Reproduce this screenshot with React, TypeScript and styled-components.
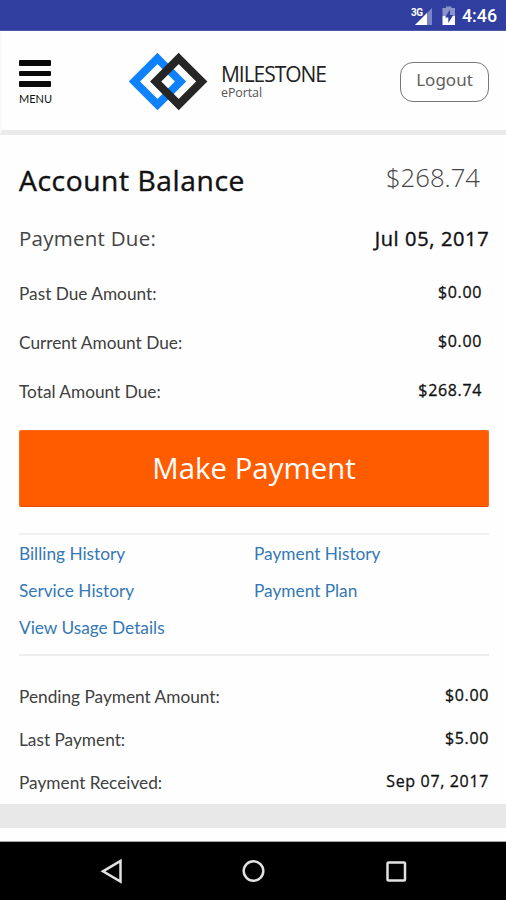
import React from 'react';
import styled, { createGlobalStyle } from 'styled-components';

const GlobalStyle = createGlobalStyle`
  * { box-sizing: border-box; }
  body { margin: 0; background: #fff; }
`;

const Screen = styled.div`
  display: flex;
  flex-direction: column;
  width: 506px;
  height: 900px;
  overflow: hidden;
  background: #fefefe;
  font-family: 'Lato', sans-serif;
  color: #111;
`;

const StatusBar = styled.div`
  flex: none;
  display: flex;
  align-items: flex-start;
  justify-content: flex-end;
  height: 31px;
  padding-right: 9px;
  background: #303f9f;
  border-bottom: 1px solid #4b58ac;
  color: #fff;
`;

const StatusIcons = styled.svg`
  display: block;
  width: 46px;
  height: 30px;
  margin-right: 5px;
`;

const NetworkType = styled.text`
  font: 700 10px 'Roboto', sans-serif;
  fill: #fff;
`;

const Clock = styled.span`
  font: 500 17.8px/32px 'Roboto', sans-serif;
`;

const Header = styled.header`
  flex: none;
  display: flex;
  height: 104px;
  padding: 0 17px;
  border-left: 2px solid #f9f9f9;
  border-bottom: 5px solid #ebebeb;
`;

const MenuButton = styled.button`
  display: flex;
  flex-direction: column;
  align-items: flex-start;
  justify-content: flex-start;
  gap: 5px;
  width: 33px;
  height: 50px;
  margin-top: 29px;
  padding: 0;
  border: 0;
  background: none;
  color: #111;
`;

const MenuBar = styled.span`
  width: 32px;
  height: 5.6px;
  border-radius: 1px;
  background: #0a0a0a;
`;

const MenuLabel = styled.span`
  font: 400 11px/14px 'Lato', sans-serif;
`;

const Brand = styled.div`
  display: flex;
  margin: 21px 0 0 77px;
`;

const BrandMark = styled.svg`
  display: block;
  width: 80px;
  height: 60px;
`;

const BrandText = styled.div`
  display: flex;
  flex-direction: column;
  margin: 11px 0 0 12px;
`;

const BrandName = styled.span`
  height: 23px;
  font: 400 21px/22px 'Open Sans', sans-serif;
  letter-spacing: -1.05px;
  white-space: nowrap;
  color: #222;
`;

const BrandSub = styled.span`
  font: 400 12.5px/14px 'Open Sans', sans-serif;
  height: 14px;
  letter-spacing: -0.1px;
  color: #555;
`;

const LogoutButton = styled.button`
  width: 89px;
  height: 40px;
  margin: 31px 0 0 auto;
  padding: 0 0 5px;
  border: 1px solid #777;
  border-radius: 13px;
  background: #fff;
  color: #606060;
  font: 400 17px/33px 'Noto Sans', sans-serif;
`;

const Main = styled.main`
  flex: none;
  display: flex;
  flex-direction: column;
  padding: 0 17px 0 19px;
`;

const Row = styled.div<{ $height: number; $inset?: number }>`
  display: flex;
  align-items: center;
  justify-content: space-between;
  height: ${(p) => p.$height}px;
  padding-right: ${(p) => p.$inset ?? 0}px;
  white-space: nowrap;
`;

const Title = styled.h1`
  margin: 0;
  font: 400 28.2px/40px 'Open Sans', sans-serif;
  letter-spacing: 0.6px;
  -webkit-text-stroke: 0.4px #111;
`;

const Balance = styled.span`
  margin-bottom: 5px;
  font: 300 25.7px/36px 'Open Sans', sans-serif;
  color: #444;
`;

const DueLabel = styled.span`
  margin-bottom: 2px;
  font: 400 20.5px/28px 'Open Sans', sans-serif;
  letter-spacing: 0.25px;
  color: #444;
`;

const DueDate = styled.span`
  margin-right: -0.3px;
  font: 400 20px/28px 'Open Sans', sans-serif;
  letter-spacing: 0.65px;
  -webkit-text-stroke: 0.4px #111;
`;

const Amounts = styled.section`
  padding: 16px 0 14px;
`;

const Label = styled.span`
  font: 400 17.25px/24px 'Lato', sans-serif;
  color: #404040;
`;

const Value = styled.span`
  margin-bottom: 4px;
  font: 400 16px/24px 'Open Sans', sans-serif;
  letter-spacing: 0.65px;
  -webkit-text-stroke: 0.3px #111;
`;

const PayButton = styled.button`
  height: 77px;
  padding: 0 0 1px;
  border: 1px solid #ff6a20;
  border-bottom: 1px solid #e94b00;
  border-radius: 2px;
  background: #ff5c00;
  color: #fff;
  font: 400 29.4px/40px 'Open Sans', sans-serif;
`;

const Links = styled.nav`
  display: grid;
  grid-template-columns: 1fr 1fr;
  grid-auto-rows: 37px;
  align-items: center;
  height: 123px;
  margin-top: 26px;
  border-top: 2px solid #f1f1f1;
  border-bottom: 2px solid #ededed;
`;

const Link = styled.a`
  font: 400 17.25px/24px 'Lato', sans-serif;
  color: #3478b5;
  text-decoration: none;
`;

const Payments = styled.section`
  padding-top: 19px;
`;

const Footer = styled.div`
  flex: none;
  height: 38px;
  border-top: 24px solid #e8e8e8;
  border-bottom: 1px solid #aaa;
`;

const NavBar = styled.div`
  flex: 1;
  background: #000;
`;

const NavIcons = styled.svg`
  display: block;
  width: 506px;
  height: 58px;
  fill: none;
  stroke: #e2e2e2;
  stroke-width: 2.5;
`;

const amounts = [
  ['Past Due Amount:', '$0.00'],
  ['Current Amount Due:', '$0.00'],
  ['Total Amount Due:', '$268.74'],
];

const links = ['Billing History', 'Payment History', 'Service History', 'Payment Plan', 'View Usage Details'];

const payments = [
  ['Pending Payment Amount:', '$0.00'],
  ['Last Payment:', '$5.00'],
  ['Payment Received:', 'Sep 07, 2017'],
];

export default function App() {
  return (
    <Screen>
      <GlobalStyle />
      <StatusBar>
        <StatusIcons viewBox="0 0 46 30">
          <path d="M21 8v17H4z" fill="#7b84c4" />
          <path d="M16 13v12H4z" fill="#fff" />
          <NetworkType x="0" y="16" textLength="12">3G</NetworkType>
          <path d="M31.500 8H35V6.500h5.500V8H44v8H31.500z" fill="#8b93cb" />
          <path d="M31.500 16H44v9H31.500z" fill="#fff" />
          <path d="M39 9.500l-5 8h3.300v5.500l5-8H39z" fill="#303f9f" />
        </StatusIcons>
        <Clock>4:46</Clock>
      </StatusBar>

      <Header>
        <MenuButton>
          <MenuBar />
          <MenuBar />
          <MenuBar />
          <MenuLabel>MENU</MenuLabel>
        </MenuButton>
        <Brand>
          <BrandMark viewBox="0 0 80 60" fill="none" strokeWidth="8">
            <path d="M28.500 6.500L51.500 29.500L28.500 52.500L5.500 29.500Z" stroke="#0f82fb" />
            <path d="M49.700 6.500L72.700 29.500L49.700 52.500L26.700 29.500Z" stroke="#252525" />
          </BrandMark>
          <BrandText>
            <BrandName>MILESTONE</BrandName>
            <BrandSub>ePortal</BrandSub>
          </BrandText>
        </Brand>
        <LogoutButton>Logout</LogoutButton>
      </Header>

      <Main>
        <Row $height={90} $inset={9}>
          <Title>Account Balance</Title>
          <Balance>$268.74</Balance>
        </Row>
        <Row $height={28}>
          <DueLabel>Payment Due:</DueLabel>
          <DueDate>Jul 05, 2017</DueDate>
        </Row>
        <Amounts>
          {amounts.map(([label, value]) => (
            <Row key={label} $height={49} $inset={7}>
              <Label>{label}</Label>
              <Value>{value}</Value>
            </Row>
          ))}
        </Amounts>
        <PayButton>Make Payment</PayButton>
        <Links>
          {links.map((name) => (
            <Link key={name} href="#">{name}</Link>
          ))}
        </Links>
        <Payments>
          {payments.map(([label, value]) => (
            <Row key={label} $height={43}>
              <Label>{label}</Label>
              <Value>{value}</Value>
            </Row>
          ))}
        </Payments>
      </Main>

      <Footer />
      <NavBar>
        <NavIcons viewBox="0 0 506 58">
          <path d="M120.500 19v20.500L103 29.300z" />
          <circle cx="253.500" cy="29" r="9.800" />
          <rect x="387.500" y="20.500" width="17.500" height="18" rx="1" />
        </NavIcons>
      </NavBar>
    </Screen>
  );
}
